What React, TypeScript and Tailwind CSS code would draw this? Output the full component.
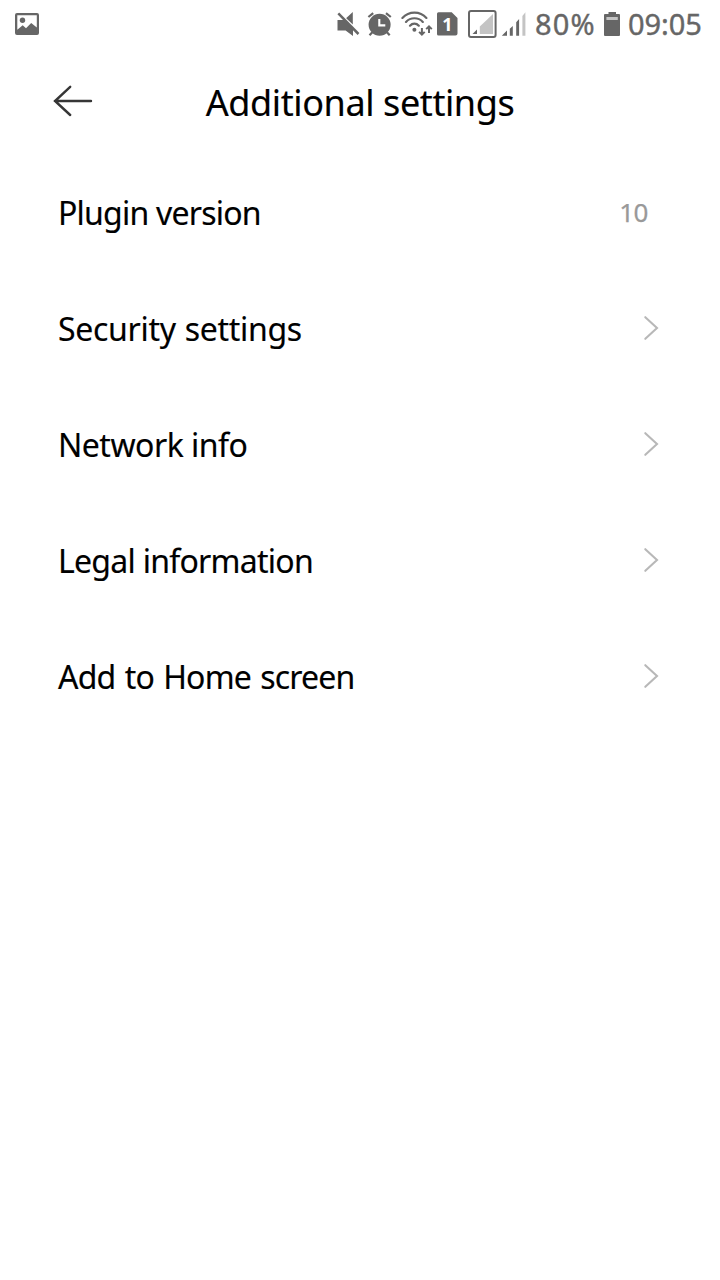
type Row = { label: string; tracking: string; value?: string };

const rows: Row[] = [
  { label: 'Plugin version', tracking: 'tracking-[-0.78px]', value: '10' },
  { label: 'Security settings', tracking: 'tracking-[-0.3px] [word-spacing:1px]' },
  { label: 'Network info', tracking: 'tracking-[-0.5px]' },
  { label: 'Legal information', tracking: 'tracking-[-0.73px]' },
  { label: 'Add to Home screen', tracking: 'tracking-[-0.8px] [word-spacing:1.7px]' },
];

function PictureIcon() {
  return (
    <svg width="25" height="24" viewBox="0 0 25 24" className="text-[#666]">
      <path
        fill="currentColor"
        fillRule="evenodd"
        d="M2 1h20a2 2 0 0 1 2 2v18a2 2 0 0 1-2 2H2a2 2 0 0 1-2-2V3a2 2 0 0 1 2-2zM2.3 3.2v14.6L7.7 13.2l3.3 3 5.2-5.2 5.6 4.6V3.2z"
      />
      <circle cx="7.5" cy="8.3" r="2.7" fill="currentColor" />
    </svg>
  );
}

function MuteIcon() {
  return (
    <svg width="23" height="24" viewBox="0 0 23 24" className="mr-[7px]">
      <path fill="currentColor" d="M0.5 8h6.8L16 15.5V24L8.6 18.5H.5zM15.8 0v12.4L9 6.2z" />
      <path stroke="#fff" strokeWidth="1" d="M2.9.4l20 20.6" />
      <path stroke="currentColor" strokeWidth="2.5" d="M1.3 1.4l20.2 20.6" />
    </svg>
  );
}

function AlarmIcon() {
  return (
    <svg width="26" height="24" viewBox="0 0 26 24" fill="none" stroke="currentColor" className="mr-[8px]">
      <circle cx="12.6" cy="12.8" r="11" fill="currentColor" stroke="none" />
      <path strokeWidth="2.2" d="M1.4 5L6.2 1.1M19 1.1L23.8 5M5.3 20.2l-2.8 3M19.9 20.2l2.8 3" />
      <path stroke="#fff" strokeWidth="2.1" d="M12.3 7v6.4h6" />
    </svg>
  );
}

function WifiIcon() {
  return (
    <svg width="33" height="26" viewBox="0 0 33 26" fill="none" stroke="currentColor" className="mr-[3px]">
      <path strokeWidth="2.2" strokeLinecap="round" d="M1.4 6.9C8-.2 19-.2 25.4 6.9M5 10.9c4.5-4.9 12.3-4.9 16.8 0M9 14.7c2.5-2.8 6.3-2.8 8.8 0" />
      <circle cx="13.4" cy="18.7" r="2" fill="currentColor" stroke="none" />
      <path strokeWidth="2" d="M20.9 17v6.6M18.1 20.9l2.8 2.8 2.8-2.8M28 22v-6.6M25.2 18.1l2.8-2.8 2.8 2.8" />
    </svg>
  );
}

function SimIcon() {
  return (
    <span className="relative mr-[10px] flex h-6 w-[21px] items-center justify-center">
      <svg width="21" height="24" viewBox="0 0 21 24" className="absolute inset-0">
        <path fill="currentColor" d="M1.5.3h13.2L20.5 6v15.5a2 2 0 0 1-2 2h-17A1.5 1.5 0 0 1 0 22V1.8A1.5 1.5 0 0 1 1.5.3z" />
      </svg>
      <span className="relative text-[18px] leading-none font-bold text-white">1</span>
    </span>
  );
}

function BoxedSignalIcon() {
  return (
    <svg width="29" height="28" viewBox="0 0 29 28" className="mr-[4px]">
      <rect x="1" y="1" width="26.6" height="26" rx="2" fill="none" stroke="currentColor" strokeWidth="2" />
      <path fill="#c4c4c4" d="M11.8 16.6L25 4v20H11.8z" />
      <path fill="currentColor" d="M9 19.5V24H4.5z" />
    </svg>
  );
}

function SignalIcon() {
  return (
    <svg width="25" height="24" viewBox="0 0 25 24" className="mr-[9px]">
      <path fill="currentColor" d="M6 18.5v5.3H.8zM8.8 16.8l3-2.7v9.7h-3zM15.2 10.3l2.9-3.2v16.7h-2.9z" />
      <path fill="#c4c4c4" d="M21.4 4l3-3.7v23.5h-3z" />
    </svg>
  );
}

function BatteryIcon() {
  return (
    <svg width="16" height="24" viewBox="0 0 16 24">
      <path fill="currentColor" d="M4.5 0h7.5v2h3a1 1 0 0 1 1 1v20a1 1 0 0 1-1 1H1a1 1 0 0 1-1-1V3a1 1 0 0 1 1-1h3.5z" />
      <path fill="#c4c4c4" d="M2.4 5h11.4v3H2.4z" />
    </svg>
  );
}

function StatusBar() {
  return (
    <div className="flex h-12 items-center pr-[17px] pl-[15px] text-[29px] text-[#666]">
      <PictureIcon />
      <div className="ml-auto flex items-center">
        <MuteIcon />
        <AlarmIcon />
        <WifiIcon />
        <SimIcon />
        <BoxedSignalIcon />
        <SignalIcon />
        <span className="w-[69px] pb-px leading-none tracking-[1.1px] [-webkit-text-stroke:0.4px_#666]">80%</span>
        <BatteryIcon />
        <span className="w-[83px] pb-px pl-2 leading-none tracking-[-0.1px] [-webkit-text-stroke:0.4px_#666]">09:05</span>
      </div>
    </div>
  );
}

function Chevron() {
  return (
    <svg width="16" height="26" viewBox="0 0 16 26" fill="none" className="mb-0.5">
      <path d="M2.3 2.2L14 13 2.3 23.8" stroke="#b8b8b8" strokeWidth="2.1" strokeLinecap="round" />
    </svg>
  );
}

export default function App() {
  return (
    <div className="flex h-[1280px] w-[720px] flex-col bg-white font-['Noto_Sans',sans-serif] text-black">
      <StatusBar />
      <header className="grid h-[107px] grid-cols-[120px_1fr_120px] items-center">
        <button aria-label="Back" className="mb-px ml-[53px] w-10">
          <svg width="40" height="32" viewBox="0 0 40 32" fill="none" stroke="#363636" strokeWidth="2.4" strokeLinecap="round">
            <path d="M2 16h36M17.2 1.8L2 16l15.2 14" />
          </svg>
        </button>
        <h1 className="pt-0.5 text-center text-[36px] tracking-[-0.4px] whitespace-nowrap [-webkit-text-stroke:0.15px_#000]">
          Additional settings
        </h1>
      </header>
      <main>
        {rows.map((row) => (
          <div key={row.label} className="flex h-[116px] items-center justify-between pr-[61px] pl-[58px]">
            <span className={`text-[32px] [-webkit-text-stroke:0.15px_#000] ${row.tracking}`}>{row.label}</span>
            {row.value ? (
              <span className="pr-[11px] pb-0.5 text-[26px] tracking-[-0.5px] text-[#999] [-webkit-text-stroke:0.25px_#999]">
                {row.value}
              </span>
            ) : (
              <Chevron />
            )}
          </div>
        ))}
      </main>
    </div>
  );
}
